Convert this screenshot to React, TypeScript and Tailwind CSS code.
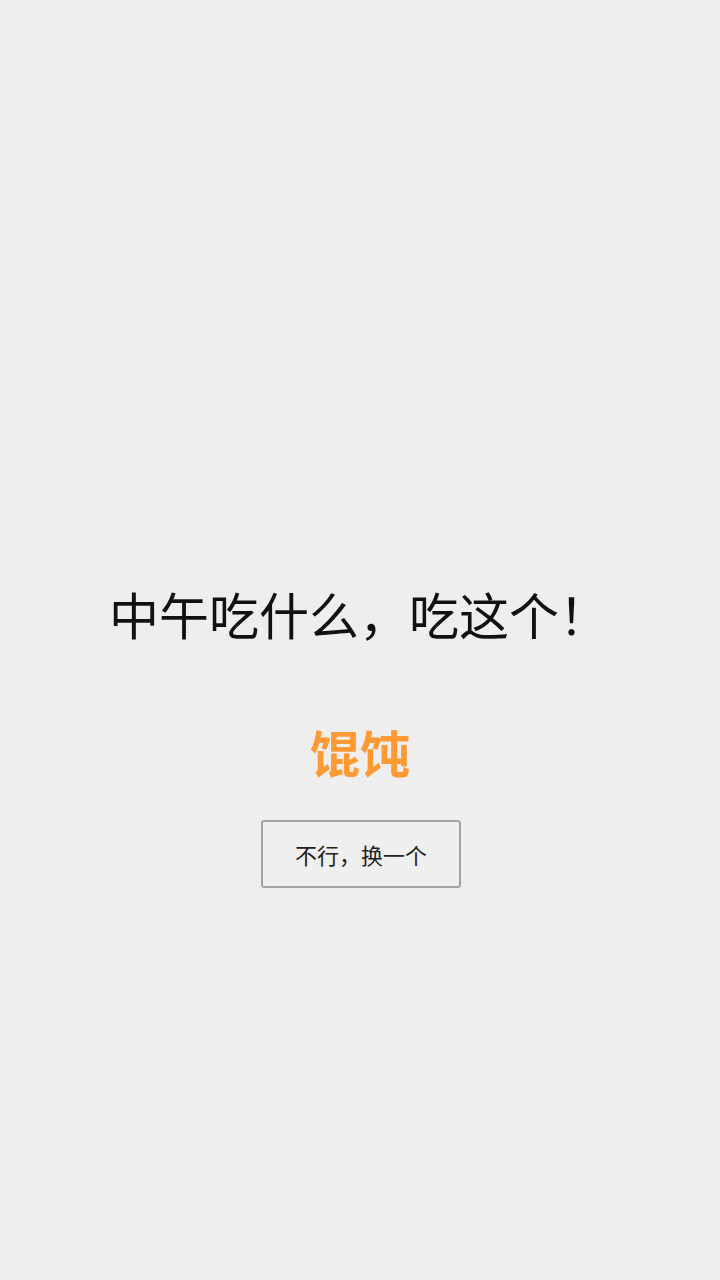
export default function App() {
  return (
    <div
      className="w-[720px] h-[1280px] bg-[#eeeeee] flex flex-col items-center"
      style={{ fontFamily: '"Noto Sans CJK SC", "Noto Sans", sans-serif' }}
    >
      <div className="mt-[588px] h-[50px] text-[50px] leading-[50px] text-[#111111] ml-[-2px] whitespace-nowrap">
        中午吃什么，吃这个！
      </div>
      <div className="mt-[88px] h-[50px] text-[50px] leading-[50px] font-bold text-[#ff9933]">
        馄饨
      </div>
      <button className="mt-[44px] ml-[2px] w-[200px] h-[68px] border-2 border-[#a3a3a3] rounded-[3px] bg-[#efefef] text-[22px] text-[#222222] flex items-center justify-center">
        不行，换一个
      </button>
    </div>
  );
}
